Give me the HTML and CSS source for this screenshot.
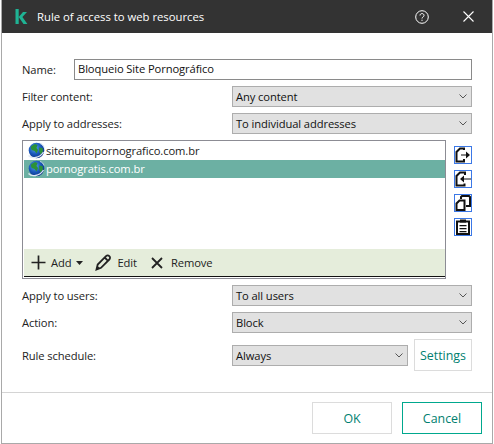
FILE: index.html
```html
<!DOCTYPE html>
<html lang="en">

<head>
    <meta charset="UTF-8">
    <title>Rule of access to web resources</title>
    <link rel="stylesheet" href="styles.css">
</head>

<body>
    <svg class="defs" width="0" height="0">
        <defs>
            <radialGradient id="sea" cx="40%" cy="35%" r="70%">
                <stop offset="0" stop-color="#5aa6ea" />
                <stop offset="0.55" stop-color="#1a58bc" />
                <stop offset="1" stop-color="#0c2c80" />
            </radialGradient>
            <symbol id="globe" viewBox="0 0 18 18">
                <circle cx="9.500" cy="8.500" r="7.800" fill="url(#sea)" />
                <path d="M4.500 4l3.500-2 2.500 1-1 3 1.500 2-1.500 3.500-1.800-2.500-3-1-1-2.500zM12 5.500l3.500.5.500 3.500-2.500 3-1.200-3z" fill="#2c9238" />
                <path d="M1.500 13.500c3 3.500 11 3 15-3.500" fill="none" stroke="#dfe8f4" stroke-width="1.300" />
                <path d="M13 1.500c2 .5 3.500 2 4 4" fill="none" stroke="#b9cfe8" stroke-width="1" />
            </symbol>
        </defs>
    </svg>

    <div class="dialog">
        <!-- title bar -->
        <div class="titlebar">
            <svg class="logo" width="13" height="15" viewBox="0 0 13 15">
                <path d="M0.500 0h3.200v15h-3.200zM3.700 8l4.300-5h4l-4.600 4.900 5 7.100h-3.900z" fill="#1fb394" />
            </svg>
            <span class="title">Rule of access to web resources</span>
            <svg class="help" width="14" height="14" viewBox="0 0 14 14">
                <circle cx="7" cy="7" r="6.300" fill="none" stroke="#fff" stroke-width="1" />
                <path d="M5 5.500c0-2.600 4-2.600 4 0 0 1.500-2 1.500-2 3" fill="none" stroke="#fff" stroke-width="1" />
                <rect x="6.500" y="9.700" width="1" height="1.200" fill="#fff" />
            </svg>
            <svg class="close" width="11" height="11" viewBox="0 0 11 11">
                <path d="M0.500 0.500l10 10M10.500 0.500l-10 10" fill="none" stroke="#fff" stroke-width="1.100" />
            </svg>
        </div>

        <div class="content">
            <div class="name-row">
                <label class="name-label">Name:</label>
                <div class="name-input">Bloqueio Site Pornográfico</div>
            </div>

            <div class="row">
                <label>Filter content:</label>
                <div class="select">Any content<svg class="chev" width="8" height="5" viewBox="0 0 8 5"><path d="M0.500 0.500l3.500 3.500 3.500-3.500" /></svg></div>
            </div>

            <div class="row">
                <label>Apply to addresses:</label>
                <div class="select">To individual addresses<svg class="chev" width="8" height="5" viewBox="0 0 8 5"><path d="M0.500 0.500l3.500 3.500 3.500-3.500" /></svg></div>
            </div>

            <div class="list-row">
                <div class="list">
                    <div class="items">
                        <div class="item"><svg class="globe" width="18" height="18"><use href="#globe" /></svg><span class="item-text">sitemuitopornografico.com.br</span></div>
                        <div class="item selected"><svg class="globe" width="18" height="18"><use href="#globe" /></svg><span class="item-text">pornogratis.com.br</span></div>
                    </div>
                    <div class="toolbar">
                        <span class="tool tool-add">
                            <svg width="15" height="15" viewBox="0 0 15 15"><path d="M7.500 0.500v14M0.500 7.500h14" fill="none" stroke="#222" stroke-width="1.700" /></svg>
                            Add
                            <svg class="caret" width="7" height="4" viewBox="0 0 7 4"><path d="M0 0h7l-3.500 4z" fill="#222" /></svg>
                        </span>
                        <span class="tool tool-edit">
                            <svg width="17" height="17" viewBox="0 0 17 17"><path d="M1.500 15.500l1.200-5 8.300-8.300c1-1 2.300-1 3.300 0s1 2.300 0 3.300l-8.300 8.300zM9.700 3.500l3.800 3.800" fill="none" stroke="#222" stroke-width="1.800" /><path d="M1.500 15.500l.9-3.800 2.900 2.900z" fill="#222" /></svg>
                            Edit
                        </span>
                        <span class="tool tool-remove">
                            <svg width="12" height="12" viewBox="0 0 12 12"><path d="M1 1l10 10M11 1l-10 10" fill="none" stroke="#222" stroke-width="1.800" /></svg>
                            Remove
                        </span>
                    </div>
                </div>

                <div class="side">
                    <span class="side-btn">
                        <svg width="16" height="16" viewBox="0 0 16 16"><path d="M9 3v-1.500h-4l-3.500 3.500v9.500h7.500v-2.500" fill="none" stroke="#111" stroke-width="2" /><path d="M6 7.500h5v-3l4 3.500-4 3.500v-3h-5z" fill="#111" /></svg>
                    </span>
                    <span class="side-btn">
                        <svg width="16" height="16" viewBox="0 0 16 16"><path d="M10 4v-2.500h-5l-3.500 3.500v9.500h8v-2" fill="none" stroke="#111" stroke-width="2" /><path d="M16 7.500h-7v-3l-4 3.500 4 3.500v-3h7z" fill="#111" /></svg>
                    </span>
                    <span class="side-btn">
                        <svg width="16" height="16" viewBox="0 0 16 16"><path d="M6 4v-2l1-1h7l1 1v9h-4M6 5.500h-1.500l-3 3v6.500h8v-9.500z" fill="none" stroke="#111" stroke-width="2" /></svg>
                    </span>
                    <span class="side-btn">
                        <svg width="16" height="16" viewBox="0 0 16 16"><path d="M2 2.500h12v12.500h-12z" fill="none" stroke="#111" stroke-width="2" /><path d="M5 0.500h6v3h-6zM4.500 6h7v1.300h-7zM4.500 9h7v1.300h-7zM4.500 12h7v1.300h-7z" fill="#111" /></svg>
                    </span>
                </div>
            </div>

            <div class="row">
                <label>Apply to users:</label>
                <div class="select">To all users<svg class="chev" width="8" height="5" viewBox="0 0 8 5"><path d="M0.500 0.500l3.500 3.500 3.500-3.500" /></svg></div>
            </div>

            <div class="row">
                <label>Action:</label>
                <div class="select">Block<svg class="chev" width="8" height="5" viewBox="0 0 8 5"><path d="M0.500 0.500l3.500 3.500 3.500-3.500" /></svg></div>
            </div>

            <div class="row schedule-row">
                <label>Rule schedule:</label>
                <div class="select select-short">Always<svg class="chev" width="8" height="5" viewBox="0 0 8 5"><path d="M0.500 0.500l3.500 3.500 3.500-3.500" /></svg></div>
                <button class="btn btn-settings">Settings</button>
            </div>
        </div>

        <div class="footer">
            <button class="btn btn-footer">OK</button>
            <button class="btn btn-footer btn-primary">Cancel</button>
        </div>
    </div>
</body>

</html>
```

FILE: styles.css
```css
body {
    margin: 0;
    padding: 0;
    background-color: #fff;
    color: #222;
    font-family: "Open Sans", "Noto Sans", sans-serif;
    font-size: 11.200px;
    letter-spacing: -0.100px;
}

.defs {
    display: block;
    height: 0;
}

.dialog {
    width: 490px;
    height: 443px;
    margin-left: 1px;
    border-left: 1px solid #a9a9a9;
    border-right: 1px solid #a9a9a9;
    border-bottom: 1px solid #a9a9a9;
    display: flex;
    flex-direction: column;
}

.titlebar {
    height: 33px;
    background-color: #333;
    color: #fff;
    display: flex;
    align-items: center;
    padding: 0 18px 0 13px;
    flex-shrink: 0;
}

.title {
    margin-left: 9px;
    font-size: 11.300px;
    letter-spacing: 0;
    flex: 1;
}

.close {
    margin-left: 34px;
}

.content {
    padding: 26px 20px 0 20px;
    flex: 1;
}

.name-row,
.row {
    display: flex;
    align-items: center;
    height: 21px;
    margin-bottom: 6px;
}

.name-label {
    width: 52px;
}

.row label {
    flex: 1;
}

.name-input {
    flex: 1;
    height: 21px;
    box-sizing: border-box;
    border: 1px solid #8a8a8a;
    padding-left: 3px;
    line-height: 18px;
    color: #111;
}

.select {
    width: 240px;
    height: 21px;
    box-sizing: border-box;
    background-color: #e1e1e1;
    border: 1px solid #adadad;
    padding-left: 3px;
    line-height: 19px;
    color: #111;
    display: flex;
    align-items: center;
    justify-content: space-between;
}

.select-short {
    width: 176px;
}

.chev {
    margin-right: 4px;
    fill: none;
    stroke: #555;
    stroke-width: 1;
}

.list-row {
    display: flex;
    gap: 8px;
    margin-bottom: 6px;
}

.list {
    width: 424px;
    height: 139px;
    box-sizing: border-box;
    border: 1px solid #8c8c94;
    display: flex;
    flex-direction: column;
    padding: 1px 0 0 1px;
}

.items {
    flex: 1;
}

.item {
    height: 18px;
    display: flex;
    align-items: center;
    gap: 1px;
    padding-left: 3px;
    color: #222;
}

.item-text {
    padding-bottom: 2px;
}

.item.selected {
    background-color: #6cb0a3;
    color: #fff;
}

.globe {
    flex-shrink: 0;
}

.toolbar {
    height: 27px;
    background-color: #e5eddb;
    border-bottom: 1px solid #111;
    display: flex;
    align-items: center;
    padding-left: 7px;
    margin-bottom: 1px;
}

.tool {
    display: flex;
    align-items: center;
    gap: 5px;
}

.tool-add {
    margin-right: 12px;
}

.tool-edit {
    margin-right: 14px;
}

.tool-remove {
    gap: 8px;
}

.side {
    display: flex;
    flex-direction: column;
    gap: 6px;
    padding-top: 6px;
}

.side-btn {
    width: 18px;
    height: 18px;
    box-sizing: border-box;
    border: 1px solid #3b78e7;
    background-color: #fff;
    overflow: hidden;
}

.side-btn svg {
    display: block;
}

.schedule-row {
    height: 32px;
    margin-bottom: 0;
}

.btn {
    background-color: #fff;
    border: 1px solid #dcdcdc;
    color: #00806f;
    font-family: inherit;
    padding: 0;
}

.btn-settings {
    width: 58px;
    height: 32px;
    margin-left: 6px;
    font-size: 12.400px;
}

.footer {
    height: 51px;
    border-top: 1px solid #d4d4d4;
    display: flex;
    justify-content: flex-end;
    gap: 10px;
    padding: 9px 10px 0 0;
    box-sizing: border-box;
    flex-shrink: 0;
}

.btn-footer {
    width: 80px;
    height: 32px;
    font-size: 12.400px;
}

.btn-primary {
    border-color: #00a88e;
}
```
